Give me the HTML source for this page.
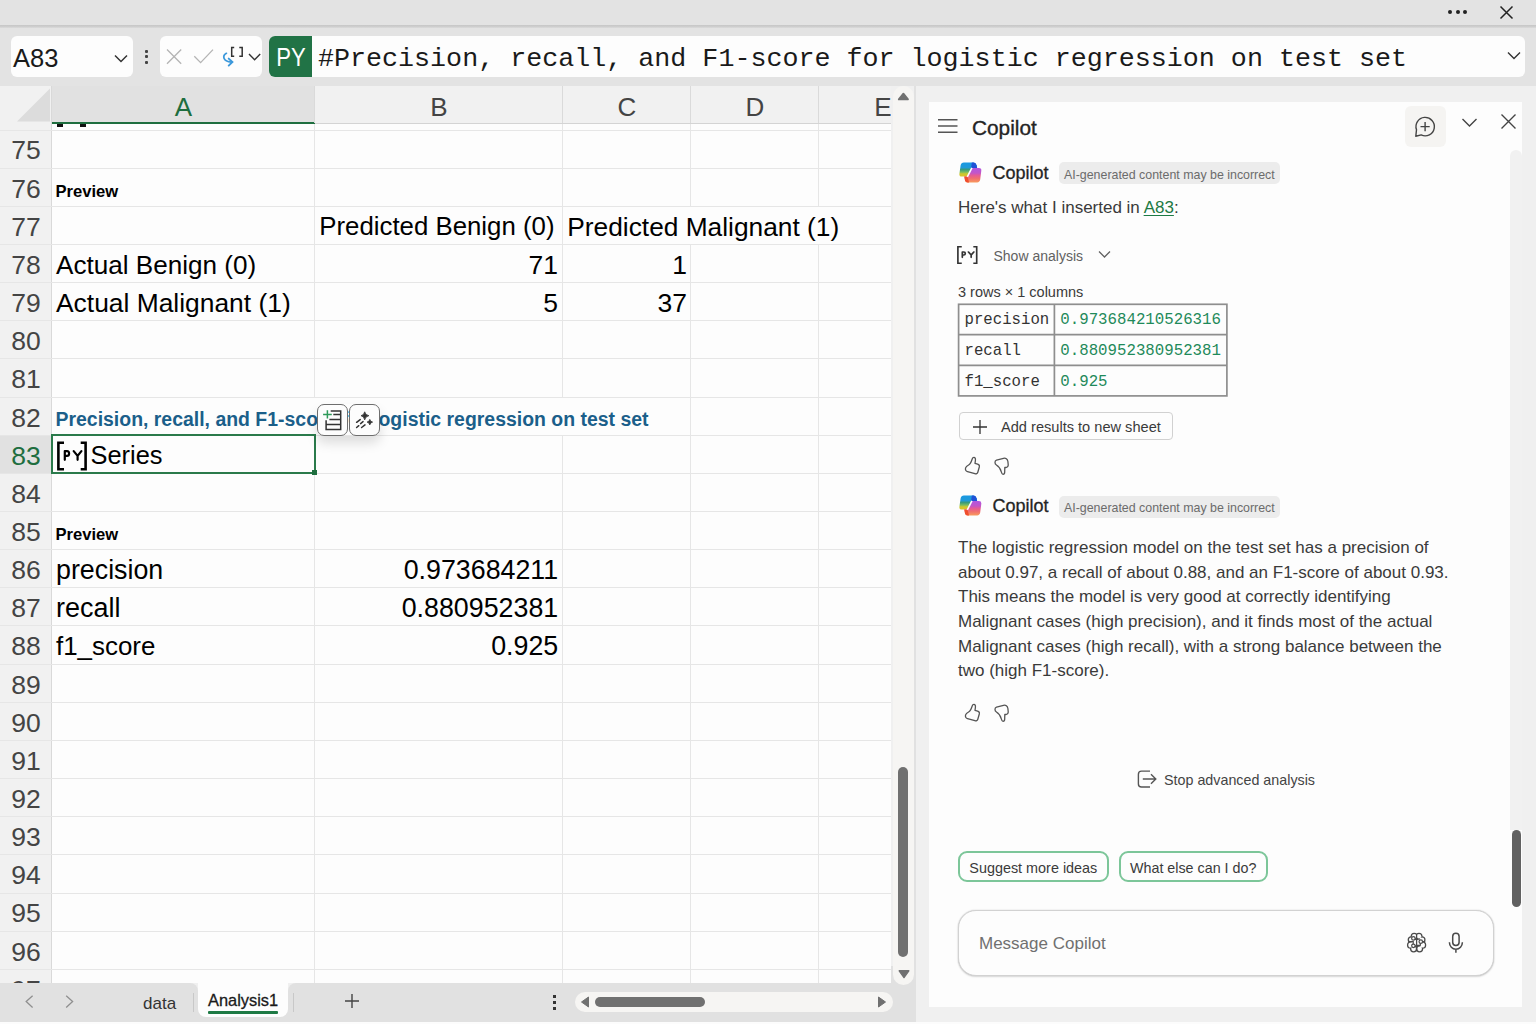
<!DOCTYPE html>
<html><head><meta charset="utf-8"><style>
html,body{margin:0;padding:0;width:1536px;height:1024px;overflow:hidden;background:#f0f0f0;}
body{position:relative;font-family:"Liberation Sans", sans-serif;}
.t{position:absolute;white-space:nowrap;}
svg{overflow:visible}
</style></head><body>
<div style="position:absolute;left:0px;top:0px;width:1536px;height:1024px;background:#f0f0f0"></div>
<div style="position:absolute;left:0px;top:0px;width:1536px;height:25px;background:#e3e3e3"></div>
<div style="position:absolute;left:0px;top:25px;width:1536px;height:3px;background:linear-gradient(#c6c6c6,#cfcfcf 60%,#dcdcdc)"></div>
<div style="position:absolute;left:0px;top:28px;width:1536px;height:58px;background:#e3e3e3"></div>
<div style="position:absolute;left:1448px;top:10px;width:4px;height:4px;background:#222;border-radius:50%"></div>
<div style="position:absolute;left:1456px;top:10px;width:4px;height:4px;background:#222;border-radius:50%"></div>
<div style="position:absolute;left:1463px;top:10px;width:4px;height:4px;background:#222;border-radius:50%"></div>
<svg style="position:absolute;left:1499px;top:5px;" width="15" height="15" viewBox="0 0 15 15"><path d="M1.5 1.5L13.5 13.5M13.5 1.5L1.5 13.5" stroke="#222" stroke-width="1.5"/></svg>
<div style="position:absolute;left:11px;top:36px;width:122px;height:41px;background:#fdfdfd;border-radius:6px"></div>
<div class="t" style="left:13px;top:45.71px;font-size:25.5px;line-height:25.5px;color:#1a1a1a;font-weight:normal;font-family:'Liberation Sans', sans-serif;">A83</div>
<svg style="position:absolute;left:114px;top:54px;" width="14" height="9" viewBox="0 0 14 9"><path d="M1 1.5L7 7.5L13 1.5" stroke="#333" stroke-width="1.5" fill="none"/></svg>
<div style="position:absolute;left:144.5px;top:49.8px;width:3px;height:3px;background:#444;border-radius:1px"></div>
<div style="position:absolute;left:144.5px;top:55.3px;width:3px;height:3px;background:#444;border-radius:1px"></div>
<div style="position:absolute;left:144.5px;top:60.8px;width:3px;height:3px;background:#444;border-radius:1px"></div>
<div style="position:absolute;left:160px;top:36px;width:102px;height:41px;background:#fdfdfd;border-radius:6px"></div>
<svg style="position:absolute;left:164px;top:47px" width="52" height="20" viewBox="164 47 52 20"><path d="M167 49.5L181.2 63.7M181.2 49.5L167 63.7" stroke="#b4b4b4" stroke-width="1.3"/><path d="M194.3 56.2L200.6 62.6L213 49.6" stroke="#b4b4b4" stroke-width="1.3" fill="none"/></svg>
<svg style="position:absolute;left:215px;top:40px;" width="50" height="32" viewBox="0 0 50 32"><path d="M226.4 53.3C222.5 55.5 222.2 61.2 231.6 62.1" transform="translate(-215,-40)" stroke="#3b98db" stroke-width="1.75" fill="none" stroke-linecap="round"/><path d="M228.7 58.6L232.4 62L228.7 65.6" transform="translate(-215,-40)" stroke="#3b98db" stroke-width="1.9" fill="none" stroke-linecap="round"/><path d="M234.2 47.4H231.7V56.3H234.2M239.3 47.4H242.2V56.3H239.3" transform="translate(-215,-40)" stroke="#333" stroke-width="1.5" fill="none"/><path d="M249 54L254.6 59.7L260.2 54" transform="translate(-215,-40)" stroke="#333" stroke-width="1.4" fill="none"/></svg>
<div style="position:absolute;left:269px;top:36px;width:1256px;height:41px;background:#fdfdfd;border-radius:6px"></div>
<div style="position:absolute;left:269px;top:36px;width:43px;height:41px;background:#217346;border-radius:6px 0 0 6px"></div>
<div class="t" style="left:291.4px;transform:translateX(-50%);top:45.10px;font-size:25.4px;line-height:25.4px;color:#fff;font-weight:normal;font-family:'Liberation Sans', sans-serif;transform:translateX(-50%) scaleX(0.87);font-weight:normal">PY</div>
<div class="t" style="left:318px;top:46.03px;font-size:26.7px;line-height:26.7px;color:#1a1a1a;font-weight:normal;font-family:'Liberation Mono', monospace;">#Precision, recall, and F1-score for logistic regression on test set</div>
<svg style="position:absolute;left:1507px;top:51px;" width="14" height="9" viewBox="0 0 14 9"><path d="M1 1.5L7 7.5L13 1.5" stroke="#333" stroke-width="1.4" fill="none"/></svg>
<div style="position:absolute;left:0px;top:86px;width:891px;height:897px;background:#fdfdfd"></div>
<div style="position:absolute;left:0px;top:86px;width:891px;height:37px;background:#f1f1f1"></div>
<div style="position:absolute;left:52px;top:86px;width:263px;height:37px;background:#e1e1e1"></div>
<div style="position:absolute;left:52px;top:123px;width:839px;height:1px;background:#d4d4d4"></div>
<div style="position:absolute;left:52px;top:122px;width:263px;height:2px;background:#1e6e3f"></div>
<svg style="position:absolute;left:0px;top:86px" width="51" height="44" viewBox="0 86 51 44"><path d="M50 88.5L50 121.5L17 121.5Z" fill="#dcdcdc"/></svg>
<div style="position:absolute;left:51px;top:86px;width:1px;height:897px;background:#d9d9d9"></div>
<div class="t" style="left:183.5px;transform:translateX(-50%);top:93.69px;font-size:26px;line-height:26px;color:#1e6e3f;font-weight:normal;font-family:'Liberation Sans', sans-serif;">A</div>
<div style="position:absolute;left:314px;top:86px;width:1px;height:37px;background:#dadada"></div>
<div class="t" style="left:439.0px;transform:translateX(-50%);top:93.69px;font-size:26px;line-height:26px;color:#444;font-weight:normal;font-family:'Liberation Sans', sans-serif;">B</div>
<div style="position:absolute;left:562px;top:86px;width:1px;height:37px;background:#dadada"></div>
<div class="t" style="left:627.0px;transform:translateX(-50%);top:93.69px;font-size:26px;line-height:26px;color:#444;font-weight:normal;font-family:'Liberation Sans', sans-serif;">C</div>
<div style="position:absolute;left:690px;top:86px;width:1px;height:37px;background:#dadada"></div>
<div class="t" style="left:755.0px;transform:translateX(-50%);top:93.69px;font-size:26px;line-height:26px;color:#444;font-weight:normal;font-family:'Liberation Sans', sans-serif;">D</div>
<div style="position:absolute;left:818px;top:86px;width:1px;height:37px;background:#dadada"></div>
<div class="t" style="left:883px;transform:translateX(-50%);top:93.69px;font-size:26px;line-height:26px;color:#444;font-weight:normal;font-family:'Liberation Sans', sans-serif;">E</div>
<div style="position:absolute;left:0px;top:123px;width:51px;height:860px;background:#f1f1f1"></div>
<div style="position:absolute;left:314px;top:124px;width:1px;height:6px;background:#e6e6e6"></div>
<div style="position:absolute;left:314px;top:130px;width:1px;height:38px;background:#e6e6e6"></div>
<div style="position:absolute;left:314px;top:168px;width:1px;height:38px;background:#e6e6e6"></div>
<div style="position:absolute;left:314px;top:206px;width:1px;height:38px;background:#e6e6e6"></div>
<div style="position:absolute;left:314px;top:244px;width:1px;height:38px;background:#e6e6e6"></div>
<div style="position:absolute;left:314px;top:282px;width:1px;height:38px;background:#e6e6e6"></div>
<div style="position:absolute;left:314px;top:320px;width:1px;height:38px;background:#e6e6e6"></div>
<div style="position:absolute;left:314px;top:358px;width:1px;height:39px;background:#e6e6e6"></div>
<div style="position:absolute;left:314px;top:435px;width:1px;height:38px;background:#e6e6e6"></div>
<div style="position:absolute;left:314px;top:473px;width:1px;height:38px;background:#e6e6e6"></div>
<div style="position:absolute;left:314px;top:511px;width:1px;height:38px;background:#e6e6e6"></div>
<div style="position:absolute;left:314px;top:549px;width:1px;height:38px;background:#e6e6e6"></div>
<div style="position:absolute;left:314px;top:587px;width:1px;height:38px;background:#e6e6e6"></div>
<div style="position:absolute;left:314px;top:625px;width:1px;height:39px;background:#e6e6e6"></div>
<div style="position:absolute;left:314px;top:664px;width:1px;height:38px;background:#e6e6e6"></div>
<div style="position:absolute;left:314px;top:702px;width:1px;height:38px;background:#e6e6e6"></div>
<div style="position:absolute;left:314px;top:740px;width:1px;height:38px;background:#e6e6e6"></div>
<div style="position:absolute;left:314px;top:778px;width:1px;height:38px;background:#e6e6e6"></div>
<div style="position:absolute;left:314px;top:816px;width:1px;height:38px;background:#e6e6e6"></div>
<div style="position:absolute;left:314px;top:854px;width:1px;height:39px;background:#e6e6e6"></div>
<div style="position:absolute;left:314px;top:893px;width:1px;height:38px;background:#e6e6e6"></div>
<div style="position:absolute;left:314px;top:931px;width:1px;height:38px;background:#e6e6e6"></div>
<div style="position:absolute;left:314px;top:969px;width:1px;height:14px;background:#e6e6e6"></div>
<div style="position:absolute;left:562px;top:124px;width:1px;height:6px;background:#e6e6e6"></div>
<div style="position:absolute;left:562px;top:130px;width:1px;height:38px;background:#e6e6e6"></div>
<div style="position:absolute;left:562px;top:168px;width:1px;height:38px;background:#e6e6e6"></div>
<div style="position:absolute;left:562px;top:206px;width:1px;height:38px;background:#e6e6e6"></div>
<div style="position:absolute;left:562px;top:244px;width:1px;height:38px;background:#e6e6e6"></div>
<div style="position:absolute;left:562px;top:282px;width:1px;height:38px;background:#e6e6e6"></div>
<div style="position:absolute;left:562px;top:320px;width:1px;height:38px;background:#e6e6e6"></div>
<div style="position:absolute;left:562px;top:358px;width:1px;height:39px;background:#e6e6e6"></div>
<div style="position:absolute;left:562px;top:435px;width:1px;height:38px;background:#e6e6e6"></div>
<div style="position:absolute;left:562px;top:473px;width:1px;height:38px;background:#e6e6e6"></div>
<div style="position:absolute;left:562px;top:511px;width:1px;height:38px;background:#e6e6e6"></div>
<div style="position:absolute;left:562px;top:549px;width:1px;height:38px;background:#e6e6e6"></div>
<div style="position:absolute;left:562px;top:587px;width:1px;height:38px;background:#e6e6e6"></div>
<div style="position:absolute;left:562px;top:625px;width:1px;height:39px;background:#e6e6e6"></div>
<div style="position:absolute;left:562px;top:664px;width:1px;height:38px;background:#e6e6e6"></div>
<div style="position:absolute;left:562px;top:702px;width:1px;height:38px;background:#e6e6e6"></div>
<div style="position:absolute;left:562px;top:740px;width:1px;height:38px;background:#e6e6e6"></div>
<div style="position:absolute;left:562px;top:778px;width:1px;height:38px;background:#e6e6e6"></div>
<div style="position:absolute;left:562px;top:816px;width:1px;height:38px;background:#e6e6e6"></div>
<div style="position:absolute;left:562px;top:854px;width:1px;height:39px;background:#e6e6e6"></div>
<div style="position:absolute;left:562px;top:893px;width:1px;height:38px;background:#e6e6e6"></div>
<div style="position:absolute;left:562px;top:931px;width:1px;height:38px;background:#e6e6e6"></div>
<div style="position:absolute;left:562px;top:969px;width:1px;height:14px;background:#e6e6e6"></div>
<div style="position:absolute;left:690px;top:124px;width:1px;height:6px;background:#e6e6e6"></div>
<div style="position:absolute;left:690px;top:130px;width:1px;height:38px;background:#e6e6e6"></div>
<div style="position:absolute;left:690px;top:168px;width:1px;height:38px;background:#e6e6e6"></div>
<div style="position:absolute;left:690px;top:244px;width:1px;height:38px;background:#e6e6e6"></div>
<div style="position:absolute;left:690px;top:282px;width:1px;height:38px;background:#e6e6e6"></div>
<div style="position:absolute;left:690px;top:320px;width:1px;height:38px;background:#e6e6e6"></div>
<div style="position:absolute;left:690px;top:358px;width:1px;height:39px;background:#e6e6e6"></div>
<div style="position:absolute;left:690px;top:397px;width:1px;height:38px;background:#e6e6e6"></div>
<div style="position:absolute;left:690px;top:435px;width:1px;height:38px;background:#e6e6e6"></div>
<div style="position:absolute;left:690px;top:473px;width:1px;height:38px;background:#e6e6e6"></div>
<div style="position:absolute;left:690px;top:511px;width:1px;height:38px;background:#e6e6e6"></div>
<div style="position:absolute;left:690px;top:549px;width:1px;height:38px;background:#e6e6e6"></div>
<div style="position:absolute;left:690px;top:587px;width:1px;height:38px;background:#e6e6e6"></div>
<div style="position:absolute;left:690px;top:625px;width:1px;height:39px;background:#e6e6e6"></div>
<div style="position:absolute;left:690px;top:664px;width:1px;height:38px;background:#e6e6e6"></div>
<div style="position:absolute;left:690px;top:702px;width:1px;height:38px;background:#e6e6e6"></div>
<div style="position:absolute;left:690px;top:740px;width:1px;height:38px;background:#e6e6e6"></div>
<div style="position:absolute;left:690px;top:778px;width:1px;height:38px;background:#e6e6e6"></div>
<div style="position:absolute;left:690px;top:816px;width:1px;height:38px;background:#e6e6e6"></div>
<div style="position:absolute;left:690px;top:854px;width:1px;height:39px;background:#e6e6e6"></div>
<div style="position:absolute;left:690px;top:893px;width:1px;height:38px;background:#e6e6e6"></div>
<div style="position:absolute;left:690px;top:931px;width:1px;height:38px;background:#e6e6e6"></div>
<div style="position:absolute;left:690px;top:969px;width:1px;height:14px;background:#e6e6e6"></div>
<div style="position:absolute;left:818px;top:124px;width:1px;height:6px;background:#e6e6e6"></div>
<div style="position:absolute;left:818px;top:130px;width:1px;height:38px;background:#e6e6e6"></div>
<div style="position:absolute;left:818px;top:168px;width:1px;height:38px;background:#e6e6e6"></div>
<div style="position:absolute;left:818px;top:244px;width:1px;height:38px;background:#e6e6e6"></div>
<div style="position:absolute;left:818px;top:282px;width:1px;height:38px;background:#e6e6e6"></div>
<div style="position:absolute;left:818px;top:320px;width:1px;height:38px;background:#e6e6e6"></div>
<div style="position:absolute;left:818px;top:358px;width:1px;height:39px;background:#e6e6e6"></div>
<div style="position:absolute;left:818px;top:397px;width:1px;height:38px;background:#e6e6e6"></div>
<div style="position:absolute;left:818px;top:435px;width:1px;height:38px;background:#e6e6e6"></div>
<div style="position:absolute;left:818px;top:473px;width:1px;height:38px;background:#e6e6e6"></div>
<div style="position:absolute;left:818px;top:511px;width:1px;height:38px;background:#e6e6e6"></div>
<div style="position:absolute;left:818px;top:549px;width:1px;height:38px;background:#e6e6e6"></div>
<div style="position:absolute;left:818px;top:587px;width:1px;height:38px;background:#e6e6e6"></div>
<div style="position:absolute;left:818px;top:625px;width:1px;height:39px;background:#e6e6e6"></div>
<div style="position:absolute;left:818px;top:664px;width:1px;height:38px;background:#e6e6e6"></div>
<div style="position:absolute;left:818px;top:702px;width:1px;height:38px;background:#e6e6e6"></div>
<div style="position:absolute;left:818px;top:740px;width:1px;height:38px;background:#e6e6e6"></div>
<div style="position:absolute;left:818px;top:778px;width:1px;height:38px;background:#e6e6e6"></div>
<div style="position:absolute;left:818px;top:816px;width:1px;height:38px;background:#e6e6e6"></div>
<div style="position:absolute;left:818px;top:854px;width:1px;height:39px;background:#e6e6e6"></div>
<div style="position:absolute;left:818px;top:893px;width:1px;height:38px;background:#e6e6e6"></div>
<div style="position:absolute;left:818px;top:931px;width:1px;height:38px;background:#e6e6e6"></div>
<div style="position:absolute;left:818px;top:969px;width:1px;height:14px;background:#e6e6e6"></div>
<div style="position:absolute;left:0px;top:435px;width:51px;height:38px;background:#e1e1e1"></div>
<div style="position:absolute;left:0px;top:130px;width:891px;height:1px;background:#e6e6e6"></div>
<div style="position:absolute;left:0px;top:168px;width:891px;height:1px;background:#e6e6e6"></div>
<div style="position:absolute;left:0px;top:206px;width:891px;height:1px;background:#e6e6e6"></div>
<div style="position:absolute;left:0px;top:244px;width:891px;height:1px;background:#e6e6e6"></div>
<div style="position:absolute;left:0px;top:282px;width:891px;height:1px;background:#e6e6e6"></div>
<div style="position:absolute;left:0px;top:320px;width:891px;height:1px;background:#e6e6e6"></div>
<div style="position:absolute;left:0px;top:358px;width:891px;height:1px;background:#e6e6e6"></div>
<div style="position:absolute;left:0px;top:397px;width:891px;height:1px;background:#e6e6e6"></div>
<div style="position:absolute;left:0px;top:435px;width:891px;height:1px;background:#e6e6e6"></div>
<div style="position:absolute;left:0px;top:473px;width:891px;height:1px;background:#e6e6e6"></div>
<div style="position:absolute;left:0px;top:511px;width:891px;height:1px;background:#e6e6e6"></div>
<div style="position:absolute;left:0px;top:549px;width:891px;height:1px;background:#e6e6e6"></div>
<div style="position:absolute;left:0px;top:587px;width:891px;height:1px;background:#e6e6e6"></div>
<div style="position:absolute;left:0px;top:625px;width:891px;height:1px;background:#e6e6e6"></div>
<div style="position:absolute;left:0px;top:664px;width:891px;height:1px;background:#e6e6e6"></div>
<div style="position:absolute;left:0px;top:702px;width:891px;height:1px;background:#e6e6e6"></div>
<div style="position:absolute;left:0px;top:740px;width:891px;height:1px;background:#e6e6e6"></div>
<div style="position:absolute;left:0px;top:778px;width:891px;height:1px;background:#e6e6e6"></div>
<div style="position:absolute;left:0px;top:816px;width:891px;height:1px;background:#e6e6e6"></div>
<div style="position:absolute;left:0px;top:854px;width:891px;height:1px;background:#e6e6e6"></div>
<div style="position:absolute;left:0px;top:893px;width:891px;height:1px;background:#e6e6e6"></div>
<div style="position:absolute;left:0px;top:931px;width:891px;height:1px;background:#e6e6e6"></div>
<div style="position:absolute;left:0px;top:969px;width:891px;height:1px;background:#e6e6e6"></div>
<div class="t" style="left:26px;transform:translateX(-50%);top:137.47px;font-size:26.5px;line-height:26.5px;color:#444;font-weight:normal;font-family:'Liberation Sans', sans-serif;">75</div>
<div class="t" style="left:26px;transform:translateX(-50%);top:175.62px;font-size:26.5px;line-height:26.5px;color:#444;font-weight:normal;font-family:'Liberation Sans', sans-serif;">76</div>
<div class="t" style="left:26px;transform:translateX(-50%);top:213.77px;font-size:26.5px;line-height:26.5px;color:#444;font-weight:normal;font-family:'Liberation Sans', sans-serif;">77</div>
<div class="t" style="left:26px;transform:translateX(-50%);top:251.92px;font-size:26.5px;line-height:26.5px;color:#444;font-weight:normal;font-family:'Liberation Sans', sans-serif;">78</div>
<div class="t" style="left:26px;transform:translateX(-50%);top:290.07px;font-size:26.5px;line-height:26.5px;color:#444;font-weight:normal;font-family:'Liberation Sans', sans-serif;">79</div>
<div class="t" style="left:26px;transform:translateX(-50%);top:328.22px;font-size:26.5px;line-height:26.5px;color:#444;font-weight:normal;font-family:'Liberation Sans', sans-serif;">80</div>
<div class="t" style="left:26px;transform:translateX(-50%);top:366.37px;font-size:26.5px;line-height:26.5px;color:#444;font-weight:normal;font-family:'Liberation Sans', sans-serif;">81</div>
<div class="t" style="left:26px;transform:translateX(-50%);top:404.52px;font-size:26.5px;line-height:26.5px;color:#444;font-weight:normal;font-family:'Liberation Sans', sans-serif;">82</div>
<div class="t" style="left:26px;transform:translateX(-50%);top:442.67px;font-size:26.5px;line-height:26.5px;color:#1e6e3f;font-weight:normal;font-family:'Liberation Sans', sans-serif;">83</div>
<div class="t" style="left:26px;transform:translateX(-50%);top:480.82px;font-size:26.5px;line-height:26.5px;color:#444;font-weight:normal;font-family:'Liberation Sans', sans-serif;">84</div>
<div class="t" style="left:26px;transform:translateX(-50%);top:518.97px;font-size:26.5px;line-height:26.5px;color:#444;font-weight:normal;font-family:'Liberation Sans', sans-serif;">85</div>
<div class="t" style="left:26px;transform:translateX(-50%);top:557.12px;font-size:26.5px;line-height:26.5px;color:#444;font-weight:normal;font-family:'Liberation Sans', sans-serif;">86</div>
<div class="t" style="left:26px;transform:translateX(-50%);top:595.27px;font-size:26.5px;line-height:26.5px;color:#444;font-weight:normal;font-family:'Liberation Sans', sans-serif;">87</div>
<div class="t" style="left:26px;transform:translateX(-50%);top:633.42px;font-size:26.5px;line-height:26.5px;color:#444;font-weight:normal;font-family:'Liberation Sans', sans-serif;">88</div>
<div class="t" style="left:26px;transform:translateX(-50%);top:671.57px;font-size:26.5px;line-height:26.5px;color:#444;font-weight:normal;font-family:'Liberation Sans', sans-serif;">89</div>
<div class="t" style="left:26px;transform:translateX(-50%);top:709.72px;font-size:26.5px;line-height:26.5px;color:#444;font-weight:normal;font-family:'Liberation Sans', sans-serif;">90</div>
<div class="t" style="left:26px;transform:translateX(-50%);top:747.87px;font-size:26.5px;line-height:26.5px;color:#444;font-weight:normal;font-family:'Liberation Sans', sans-serif;">91</div>
<div class="t" style="left:26px;transform:translateX(-50%);top:786.02px;font-size:26.5px;line-height:26.5px;color:#444;font-weight:normal;font-family:'Liberation Sans', sans-serif;">92</div>
<div class="t" style="left:26px;transform:translateX(-50%);top:824.17px;font-size:26.5px;line-height:26.5px;color:#444;font-weight:normal;font-family:'Liberation Sans', sans-serif;">93</div>
<div class="t" style="left:26px;transform:translateX(-50%);top:862.32px;font-size:26.5px;line-height:26.5px;color:#444;font-weight:normal;font-family:'Liberation Sans', sans-serif;">94</div>
<div class="t" style="left:26px;transform:translateX(-50%);top:900.47px;font-size:26.5px;line-height:26.5px;color:#444;font-weight:normal;font-family:'Liberation Sans', sans-serif;">95</div>
<div class="t" style="left:26px;transform:translateX(-50%);top:938.62px;font-size:26.5px;line-height:26.5px;color:#444;font-weight:normal;font-family:'Liberation Sans', sans-serif;">96</div>
<div class="t" style="left:26px;transform:translateX(-50%);top:976.77px;font-size:26.5px;line-height:26.5px;color:#444;font-weight:normal;font-family:'Liberation Sans', sans-serif;">97</div>
<div style="position:absolute;left:57px;top:124px;width:6px;height:3px;background:#111"></div>
<div style="position:absolute;left:80px;top:124px;width:6px;height:3px;background:#111"></div>
<div class="t" style="left:55.5px;top:183.75px;font-size:16.6px;line-height:16.6px;color:#000;font-weight:bold;font-family:'Liberation Sans', sans-serif;">Preview</div>
<div class="t" style="left:319.3px;top:214.36px;font-size:25.8px;line-height:25.8px;color:#000;font-weight:normal;font-family:'Liberation Sans', sans-serif;">Predicted Benign (0)</div>
<div class="t" style="left:567.3px;top:213.94px;font-size:26.3px;line-height:26.3px;color:#000;font-weight:normal;font-family:'Liberation Sans', sans-serif;">Predicted Malignant (1)</div>
<div class="t" style="left:56px;top:252.26px;font-size:26.1px;line-height:26.1px;color:#000;font-weight:normal;font-family:'Liberation Sans', sans-serif;">Actual Benign (0)</div>
<div class="t" style="left:56px;top:290.15px;font-size:26.4px;line-height:26.4px;color:#000;font-weight:normal;font-family:'Liberation Sans', sans-serif;">Actual Malignant (1)</div>
<div class="t" style="right:849px;top:251.92px;font-size:26.5px;line-height:26.5px;color:#000;font-weight:normal;font-family:'Liberation Sans', sans-serif;">1</div>
<div class="t" style="right:978px;top:251.92px;font-size:26.5px;line-height:26.5px;color:#000;font-weight:normal;font-family:'Liberation Sans', sans-serif;">71</div>
<div class="t" style="right:978px;top:290.07px;font-size:26.5px;line-height:26.5px;color:#000;font-weight:normal;font-family:'Liberation Sans', sans-serif;">5</div>
<div class="t" style="right:849px;top:290.07px;font-size:26.5px;line-height:26.5px;color:#000;font-weight:normal;font-family:'Liberation Sans', sans-serif;">37</div>
<div class="t" style="left:55.5px;top:410.49px;font-size:19.45px;line-height:19.45px;color:#1b5f8a;font-weight:bold;font-family:'Liberation Sans', sans-serif;">Precision, recall, and F1-score for logistic regression on test set</div>
<div class="t" style="left:55.5px;top:527.10px;font-size:16.6px;line-height:16.6px;color:#000;font-weight:bold;font-family:'Liberation Sans', sans-serif;">Preview</div>
<div class="t" style="left:56px;top:556.86px;font-size:26.8px;line-height:26.8px;color:#000;font-weight:normal;font-family:'Liberation Sans', sans-serif;">precision</div>
<div class="t" style="left:56px;top:594.84px;font-size:27px;line-height:27px;color:#000;font-weight:normal;font-family:'Liberation Sans', sans-serif;">recall</div>
<div class="t" style="left:56px;top:633.93px;font-size:25.9px;line-height:25.9px;color:#000;font-weight:normal;font-family:'Liberation Sans', sans-serif;">f1_score</div>
<div class="t" style="right:977.8px;top:556.86px;font-size:26.8px;line-height:26.8px;color:#000;font-weight:normal;font-family:'Liberation Sans', sans-serif;">0.973684211</div>
<div class="t" style="right:977.8px;top:595.01px;font-size:26.8px;line-height:26.8px;color:#000;font-weight:normal;font-family:'Liberation Sans', sans-serif;">0.880952381</div>
<div class="t" style="right:977.8px;top:633.16px;font-size:26.8px;line-height:26.8px;color:#000;font-weight:normal;font-family:'Liberation Sans', sans-serif;">0.925</div>
<svg style="position:absolute;left:52px;top:438px;" width="40" height="34" viewBox="0 0 40 34"><path d="M12 4.8H6.4V31.2H12M28.7 4.8H33.6V31.2H28.7" stroke="#000" stroke-width="2.6" fill="none"/><path d="M12.8 21.8V13.1H15C17.8 13.1 17.8 17.9 15 17.9H12.8M21.7 13.1L25.6 17.9L29.4 13.1M25.6 17.9V21.8" stroke="#000" stroke-width="2.2" fill="none" stroke-linecap="round" stroke-linejoin="round"/></svg>
<div class="t" style="left:90.5px;top:443.30px;font-size:25.4px;line-height:25.4px;color:#000;font-weight:normal;font-family:'Liberation Sans', sans-serif;">Series</div>
<div style="position:absolute;left:50.5px;top:434px;width:265px;height:40px;border:2px solid #2a7a4b;box-sizing:border-box"></div>
<div style="position:absolute;left:312px;top:470px;width:5px;height:5px;background:#1e6e3f"></div>
<div style="position:absolute;left:317px;top:404.2px;width:63px;height:31.6px;box-shadow:0 7px 12px rgba(0,0,0,0.13);border-radius:7px"></div>
<div style="position:absolute;left:317px;top:404.2px;width:31.3px;height:31.6px;background:#fdfdfd;border:1.6px solid #6e6e6e;border-radius:7px;box-sizing:border-box"></div>
<div style="position:absolute;left:348.6px;top:404.2px;width:31.4px;height:31.6px;background:#fdfdfd;border:1.6px solid #6e6e6e;border-radius:7px;box-sizing:border-box"></div>
<svg style="position:absolute;left:317px;top:405px" width="30" height="30" viewBox="317 405 30 30"><path d="M323.1 414.6H331.8M327.4 410.3V418.6" stroke="#2e9a5a" stroke-width="1.5"/><path d="M330.7 410.9H340.7V429.4H326.1V420.3M333.3 414.6H340.7M329.4 419.4H340.7M326.1 424.5H340.7" stroke="#333" stroke-width="1.5" fill="none"/></svg>
<svg style="position:absolute;left:349px;top:405px" width="30" height="30" viewBox="349 405 30 30"><path d="M364.7 411.8Q365.3 415.1 368.9 415.7Q365.3 416.3 364.7 419.9Q364.1 416.3 361 415.7Q364.1 415.1 364.7 411.8Z" fill="#333" stroke="#333" stroke-width="0.8" stroke-linejoin="round"/><path d="M369.8 419.4Q370.2 421.7 372.6 422.1Q370.2 422.5 369.8 424.9Q369.4 422.5 367.1 422.1Q369.4 421.7 369.8 419.4Z" fill="#333" stroke="#333" stroke-width="0.8" stroke-linejoin="round"/><path d="M356.6 422.3L360.2 419.6M360.6 423.6L363 421.6M356.6 427.5L358.8 425.7M361.6 427.5L365 424.9" stroke="#333" stroke-width="1.5" stroke-linecap="round"/></svg>
<div style="position:absolute;left:0px;top:983px;width:198px;height:39px;background:#e1e1e1;border-top-right-radius:8px"></div>
<div style="position:absolute;left:198px;top:1000px;width:90px;height:22px;background:#e1e1e1"></div>
<div style="position:absolute;left:288px;top:983px;width:628px;height:39px;background:#e1e1e1;border-top-left-radius:8px"></div>
<div style="position:absolute;left:0px;top:1022px;width:1536px;height:2px;background:#fcfcfc"></div>
<svg style="position:absolute;left:20px;top:990px" width="60" height="22" viewBox="20 990 60 22"><path d="M32.6 995.8L26.2 1001.6L32.6 1007.4M66.2 995.8L72.6 1001.6L66.2 1007.4" stroke="#8f8f8f" stroke-width="1.3" fill="none"/></svg>
<div class="t" style="left:143px;top:994.61px;font-size:17px;line-height:17px;color:#333;font-weight:normal;font-family:'Liberation Sans', sans-serif;">data</div>
<div style="position:absolute;left:192.5px;top:993px;width:1px;height:19px;background:#c8c8c8"></div>
<div style="position:absolute;left:198px;top:983px;width:90px;height:34px;background:#fdfdfd;border-radius:0 0 8px 8px"></div>
<div class="t" style="left:208px;top:992.12px;font-size:16.4px;line-height:16.4px;color:#1a1a1a;font-weight:normal;font-family:'Liberation Sans', sans-serif;-webkit-text-stroke:0.3px #1a1a1a">Analysis1</div>
<div style="position:absolute;left:208px;top:1011px;width:70px;height:3px;background:#1e7a45;border-radius:1px"></div>
<div style="position:absolute;left:293px;top:993px;width:1px;height:19px;background:#c8c8c8"></div>
<svg style="position:absolute;left:344px;top:993px;" width="16" height="16" viewBox="0 0 16 16"><path d="M8 1V15M1 8H15" stroke="#444" stroke-width="1.4"/></svg>
<div style="position:absolute;left:553px;top:995px;width:3px;height:3px;background:#333"></div>
<div style="position:absolute;left:553px;top:1001px;width:3px;height:3px;background:#333"></div>
<div style="position:absolute;left:553px;top:1007px;width:3px;height:3px;background:#333"></div>
<div style="position:absolute;left:575px;top:991.7px;width:317.5px;height:20.5px;background:#f6f5f3;border-radius:10px"></div>
<svg style="position:absolute;left:580px;top:996px;" width="10" height="12" viewBox="0 0 10 12"><path d="M8.5 1V11L1.5 6Z" fill="#707070" stroke="#707070" stroke-linejoin="round"/></svg>
<svg style="position:absolute;left:877px;top:996px;" width="10" height="12" viewBox="0 0 10 12"><path d="M1.5 1V11L8.5 6Z" fill="#707070" stroke="#707070" stroke-linejoin="round"/></svg>
<div style="position:absolute;left:595px;top:996.5px;width:110px;height:10px;background:#707070;border-radius:5px"></div>
<div style="position:absolute;left:891px;top:86px;width:25px;height:880px;background:#f0f0f0"></div>
<div style="position:absolute;left:891px;top:966px;width:25px;height:18px;background:#e1e1e1"></div>
<div style="position:absolute;left:892.5px;top:86px;width:21px;height:898.5px;background:#f6f5f3;border-radius:11px"></div>
<div style="position:absolute;left:914px;top:86px;width:2px;height:898px;background:#e1e1e1"></div>
<svg style="position:absolute;left:896px;top:89px" width="16" height="12" viewBox="896 89 16 12"><path d="M903.4 93.6L908 99.4H898.8Z" fill="#707070" stroke="#707070" stroke-width="1.8" stroke-linejoin="round"/></svg>
<svg style="position:absolute;left:896px;top:968px" width="16" height="12" viewBox="896 968 16 12"><path d="M899.2 970.8H908.8L904 977.6Z" fill="#707070" stroke="#707070" stroke-width="1.4" stroke-linejoin="round"/></svg>
<div style="position:absolute;left:898px;top:767px;width:10px;height:190px;background:#707070;border-radius:5px"></div>
<div style="position:absolute;left:929px;top:102px;width:593px;height:905px;background:#fdfdfd"></div>
<svg style="position:absolute;left:935px;top:115px" width="26" height="22" viewBox="935 115 26 22"><path d="M938 119.7H957.5M938 125.95H957.5M938 132.2H957.5" stroke="#555" stroke-width="1.5"/></svg>
<div class="t" style="left:972px;top:117.59px;font-size:20.8px;line-height:20.8px;color:#242424;font-weight:normal;font-family:'Liberation Sans', sans-serif;-webkit-text-stroke:0.35px #242424">Copilot</div>
<div style="position:absolute;left:1405px;top:106px;width:41px;height:41px;background:#f5f4f2;border-radius:6px"></div>
<svg style="position:absolute;left:1412px;top:113px" width="26" height="26" viewBox="1412 113 26 26"><path d="M1421.2 134.9A9.2 9.2 0 1 0 1416.5 129.7L1415.8 136.3Z" stroke="#444" stroke-width="1.4" fill="none" stroke-linejoin="round"/><path d="M1425.1 122V131.2M1420.5 126.6H1429.7" stroke="#444" stroke-width="1.4"/></svg>
<svg style="position:absolute;left:1461px;top:117px;" width="17" height="11" viewBox="0 0 17 11"><path d="M1.5 2L8.5 9L15.5 2" stroke="#444" stroke-width="1.4" fill="none"/></svg>
<svg style="position:absolute;left:1500px;top:113px;" width="17" height="17" viewBox="0 0 17 17"><path d="M1.5 1.5L15.5 15.5M15.5 1.5L1.5 15.5" stroke="#444" stroke-width="1.4"/></svg>
<div style="position:absolute;left:1509.5px;top:150px;width:12.5px;height:680px;background:#f1f1f1;border-radius:6px 6px 0 0"></div>
<div style="position:absolute;left:1512px;top:830px;width:9px;height:77px;background:#616161;border-radius:4.5px"></div>
<svg style="position:absolute;left:954.7px;top:157.8px" width="32" height="30" viewBox="954.7 157.8 32 30"><defs><linearGradient id="gl161" x1="0" y1="0" x2="0" y2="1"><stop offset="0" stop-color="#1a98e2"/><stop offset="0.35" stop-color="#1f9ad8"/><stop offset="0.5" stop-color="#3a9a78"/><stop offset="0.68" stop-color="#78bd62"/><stop offset="0.8" stop-color="#cfc72c"/><stop offset="1" stop-color="#d9c22a"/></linearGradient><linearGradient id="gr161" x1="0" y1="0" x2="0" y2="1"><stop offset="0" stop-color="#b256e0"/><stop offset="0.35" stop-color="#c256c8"/><stop offset="0.5" stop-color="#e45a98"/><stop offset="0.72" stop-color="#f06e70"/><stop offset="1" stop-color="#f99a5c"/></linearGradient></defs><path d="M963.6 162.4H973.4Q975.6 162.4 976.3 165L976.8 167.8H971.2L967.2 176.4H961.3Q958.7 176.4 959.1 173.6L960.3 165.4Q960.8 162.4 963.6 162.4Z" fill="url(#gl161)"/><path d="M971.5 162.4H973.4Q975.6 162.4 976.3 165L976.8 167.8H970.8Z" fill="#1f52d6"/><path d="M971.2 167.8H978.6Q981.4 167.8 981 170.6L979.9 179.4Q979.5 182.2 976.8 182.2H967.3Q965.2 182.2 964.7 180.2L964 176.4H967.2Z" fill="url(#gr161)"/><path d="M964 176.4H967.2L968.8 182.2H967.3Q965.2 182.2 964.7 180.2Z" fill="#f04e2e"/><path d="M971.6 167.6L967 176.6" stroke="#fdfdfd" stroke-width="1.6"/></svg>
<div class="t" style="left:992.5px;top:163.86px;font-size:18px;line-height:18px;color:#242424;font-weight:normal;font-family:'Liberation Sans', sans-serif;-webkit-text-stroke:0.3px #242424">Copilot</div>
<div style="position:absolute;left:1058.7px;top:162.3px;width:221.5px;height:22px;background:#ececec;border-radius:5px"></div>
<div class="t" style="left:1064px;top:168.60px;font-size:12.4px;line-height:12.4px;color:#6b6b6b;font-weight:normal;font-family:'Liberation Sans', sans-serif;">AI-generated content may be incorrect</div>
<div class="t" style="left:958px;top:199.21px;font-size:17px;line-height:17px;color:#3a3a3a;font-weight:normal;font-family:'Liberation Sans', sans-serif;">Here's what I inserted in <span style="color:#1d7a44;text-decoration:underline;text-underline-offset:2px">A83</span>:</div>
<svg style="position:absolute;left:957px;top:245.6px" width="20.6" height="18" viewBox="5.1 3.5 29.8 29" preserveAspectRatio="none"><path d="M12 4.8H6.4V31.2H12M28.7 4.8H33.6V31.2H28.7" stroke="#333" stroke-width="2.4" fill="none"/><path d="M12.8 21.8V13.1H15C17.8 13.1 17.8 17.9 15 17.9H12.8M21.7 13.1L25.6 17.9L29.4 13.1M25.6 17.9V21.8" stroke="#333" stroke-width="2.5" fill="none" stroke-linecap="round" stroke-linejoin="round"/></svg>
<div class="t" style="left:993.5px;top:248.65px;font-size:14px;line-height:14px;color:#616161;font-weight:normal;font-family:'Liberation Sans', sans-serif;">Show analysis</div>
<svg style="position:absolute;left:1098px;top:250px;" width="13" height="9" viewBox="0 0 13 9"><path d="M1 1.5L6.5 7L12 1.5" stroke="#616161" stroke-width="1.3" fill="none"/></svg>
<div class="t" style="left:958px;top:285.03px;font-size:14.5px;line-height:14.5px;color:#3a3a3a;font-weight:normal;font-family:'Liberation Sans', sans-serif;">3 rows × 1 columns</div>
<svg style="position:absolute;left:955px;top:300px" width="276" height="100" viewBox="955 300 276 100"><rect x="958.6" y="304.3" width="268.3" height="91.6" stroke="#8e8e8e" stroke-width="1.7" fill="none"/><path d="M1054.4 304.3V395.9M958.6 334.6H1226.9M958.6 365.4H1226.9" stroke="#8e8e8e" stroke-width="1.7"/></svg>
<div class="t" style="left:964.5px;top:313.17px;font-size:15.7px;line-height:15.7px;color:#333;font-weight:normal;font-family:'Liberation Mono', monospace;">precision</div>
<div class="t" style="left:1060.3px;top:313.13px;font-size:15.75px;line-height:15.75px;color:#1f8a5a;font-weight:normal;font-family:'Liberation Mono', monospace;">0.973684210526316</div>
<div class="t" style="left:964.5px;top:344.17px;font-size:15.7px;line-height:15.7px;color:#333;font-weight:normal;font-family:'Liberation Mono', monospace;">recall</div>
<div class="t" style="left:1060.3px;top:344.13px;font-size:15.75px;line-height:15.75px;color:#1f8a5a;font-weight:normal;font-family:'Liberation Mono', monospace;">0.880952380952381</div>
<div class="t" style="left:964.5px;top:375.17px;font-size:15.7px;line-height:15.7px;color:#333;font-weight:normal;font-family:'Liberation Mono', monospace;">f1_score</div>
<div class="t" style="left:1060.3px;top:375.13px;font-size:15.75px;line-height:15.75px;color:#1f8a5a;font-weight:normal;font-family:'Liberation Mono', monospace;">0.925</div>
<div style="position:absolute;left:958.5px;top:412.4px;width:214px;height:28px;border:1px solid #d1d1d1;border-radius:4px;box-sizing:border-box;background:#fdfdfd"></div>
<svg style="position:absolute;left:972px;top:419px;" width="16" height="16" viewBox="0 0 16 16"><path d="M8 1V15M1 8H15" stroke="#333" stroke-width="1.3"/></svg>
<div class="t" style="left:1001px;top:420.24px;font-size:14.6px;line-height:14.6px;color:#3a3a3a;font-weight:normal;font-family:'Liberation Sans', sans-serif;">Add results to new sheet</div>
<svg style="position:absolute;left:960px;top:454px" width="52" height="24" viewBox="960 454 52 24"><path d="M973.9 457.4C975.2 457.4 975.6 458.8 975.4 460.5L975 463.4L977.6 464.1C979 464.5 979.6 465.7 979.3 467L977.8 472.2C977.4 473.6 976.2 474.1 974.9 473.7L967.5 471.6C965.8 471.1 965.1 469.5 965.6 467.9C966 466.7 967.2 465.7 968.6 465C970.6 464 971.4 461.5 972.2 459C972.5 458 973 457.4 973.9 457.4Z" stroke="#555" stroke-width="1.3" fill="none" stroke-linejoin="round"/><path d="M996.5 460.1L1003.5 458.3C1005.7 457.8 1007.5 459.2 1007.9 461.5L1008.2 464.5C1008.4 466.3 1007.3 467.5 1005.8 467.5H1004.8L1004.7 472C1004.7 473.6 1003.8 474.3 1003 474.3C1002.2 474.3 1001.7 473.3 1001.3 471.8C1000.4 468.5 998.5 466.2 996.4 465C994.4 463.8 994.6 460.6 996.5 460.1Z" stroke="#555" stroke-width="1.3" fill="none" stroke-linejoin="round"/></svg>
<svg style="position:absolute;left:954.7px;top:491px" width="32" height="30" viewBox="954.7 157.8 32 30"><defs><linearGradient id="gl495" x1="0" y1="0" x2="0" y2="1"><stop offset="0" stop-color="#1a98e2"/><stop offset="0.35" stop-color="#1f9ad8"/><stop offset="0.5" stop-color="#3a9a78"/><stop offset="0.68" stop-color="#78bd62"/><stop offset="0.8" stop-color="#cfc72c"/><stop offset="1" stop-color="#d9c22a"/></linearGradient><linearGradient id="gr495" x1="0" y1="0" x2="0" y2="1"><stop offset="0" stop-color="#b256e0"/><stop offset="0.35" stop-color="#c256c8"/><stop offset="0.5" stop-color="#e45a98"/><stop offset="0.72" stop-color="#f06e70"/><stop offset="1" stop-color="#f99a5c"/></linearGradient></defs><path d="M963.6 162.4H973.4Q975.6 162.4 976.3 165L976.8 167.8H971.2L967.2 176.4H961.3Q958.7 176.4 959.1 173.6L960.3 165.4Q960.8 162.4 963.6 162.4Z" fill="url(#gl495)"/><path d="M971.5 162.4H973.4Q975.6 162.4 976.3 165L976.8 167.8H970.8Z" fill="#1f52d6"/><path d="M971.2 167.8H978.6Q981.4 167.8 981 170.6L979.9 179.4Q979.5 182.2 976.8 182.2H967.3Q965.2 182.2 964.7 180.2L964 176.4H967.2Z" fill="url(#gr495)"/><path d="M964 176.4H967.2L968.8 182.2H967.3Q965.2 182.2 964.7 180.2Z" fill="#f04e2e"/><path d="M971.6 167.6L967 176.6" stroke="#fdfdfd" stroke-width="1.6"/></svg>
<div class="t" style="left:992.5px;top:497.06px;font-size:18px;line-height:18px;color:#242424;font-weight:normal;font-family:'Liberation Sans', sans-serif;-webkit-text-stroke:0.3px #242424">Copilot</div>
<div style="position:absolute;left:1058.7px;top:495.5px;width:221.5px;height:22px;background:#ececec;border-radius:5px"></div>
<div class="t" style="left:1064px;top:501.80px;font-size:12.4px;line-height:12.4px;color:#6b6b6b;font-weight:normal;font-family:'Liberation Sans', sans-serif;">AI-generated content may be incorrect</div>
<div class="t" style="left:958px;top:539.21px;font-size:17px;line-height:17px;color:#3a3a3a;font-weight:normal;font-family:'Liberation Sans', sans-serif;">The logistic regression model on the test set has a precision of</div>
<div class="t" style="left:958px;top:563.79px;font-size:17px;line-height:17px;color:#3a3a3a;font-weight:normal;font-family:'Liberation Sans', sans-serif;">about 0.97, a recall of about 0.88, and an F1-score of about 0.93.</div>
<div class="t" style="left:958px;top:588.37px;font-size:17px;line-height:17px;color:#3a3a3a;font-weight:normal;font-family:'Liberation Sans', sans-serif;">This means the model is very good at correctly identifying</div>
<div class="t" style="left:958px;top:612.95px;font-size:17px;line-height:17px;color:#3a3a3a;font-weight:normal;font-family:'Liberation Sans', sans-serif;">Malignant cases (high precision), and it finds most of the actual</div>
<div class="t" style="left:958px;top:637.53px;font-size:17px;line-height:17px;color:#3a3a3a;font-weight:normal;font-family:'Liberation Sans', sans-serif;">Malignant cases (high recall), with a strong balance between the</div>
<div class="t" style="left:958px;top:662.11px;font-size:17px;line-height:17px;color:#3a3a3a;font-weight:normal;font-family:'Liberation Sans', sans-serif;">two (high F1-score).</div>
<svg style="position:absolute;left:960px;top:701px" width="52" height="24" viewBox="960 454 52 24"><path d="M973.9 457.4C975.2 457.4 975.6 458.8 975.4 460.5L975 463.4L977.6 464.1C979 464.5 979.6 465.7 979.3 467L977.8 472.2C977.4 473.6 976.2 474.1 974.9 473.7L967.5 471.6C965.8 471.1 965.1 469.5 965.6 467.9C966 466.7 967.2 465.7 968.6 465C970.6 464 971.4 461.5 972.2 459C972.5 458 973 457.4 973.9 457.4Z" stroke="#555" stroke-width="1.3" fill="none" stroke-linejoin="round"/><path d="M996.5 460.1L1003.5 458.3C1005.7 457.8 1007.5 459.2 1007.9 461.5L1008.2 464.5C1008.4 466.3 1007.3 467.5 1005.8 467.5H1004.8L1004.7 472C1004.7 473.6 1003.8 474.3 1003 474.3C1002.2 474.3 1001.7 473.3 1001.3 471.8C1000.4 468.5 998.5 466.2 996.4 465C994.4 463.8 994.6 460.6 996.5 460.1Z" stroke="#555" stroke-width="1.3" fill="none" stroke-linejoin="round"/></svg>
<svg style="position:absolute;left:1134px;top:766px" width="26" height="26" viewBox="1134 766 26 26"><path d="M1150 771.1H1141.5Q1138.4 771.1 1138.4 774.2V783.9Q1138.4 787 1141.5 787H1150M1142.8 779H1155.3M1151 774.3L1155.8 779L1151 783.7" stroke="#555" stroke-width="1.4" fill="none"/></svg>
<div class="t" style="left:1164px;top:773.30px;font-size:14.3px;line-height:14.3px;color:#444;font-weight:normal;font-family:'Liberation Sans', sans-serif;">Stop advanced analysis</div>
<div style="position:absolute;left:958px;top:851px;width:150.5px;height:31px;border:2px solid #7cc699;border-radius:9px;box-sizing:border-box"></div>
<div class="t" style="left:969.3px;top:861.31px;font-size:14.4px;line-height:14.4px;color:#3a3a3a;font-weight:normal;font-family:'Liberation Sans', sans-serif;">Suggest more ideas</div>
<div style="position:absolute;left:1119px;top:851px;width:148.5px;height:31px;border:2px solid #7cc699;border-radius:9px;box-sizing:border-box"></div>
<div class="t" style="left:1130px;top:861.40px;font-size:14.3px;line-height:14.3px;color:#3a3a3a;font-weight:normal;font-family:'Liberation Sans', sans-serif;">What else can I do?</div>
<div style="position:absolute;left:957.5px;top:909.7px;width:536.3px;height:66px;border:1px solid #d2d2d2;border-radius:18px;box-sizing:border-box;background:#fdfdfd;box-shadow:0 0 1.5px rgba(0,0,0,0.2),0 1px 2px rgba(0,0,0,0.12)"></div>
<div class="t" style="left:979px;top:935.31px;font-size:17px;line-height:17px;color:#707070;font-weight:normal;font-family:'Liberation Sans', sans-serif;">Message Copilot</div>
<svg style="position:absolute;left:1404px;top:930px" width="26" height="25" viewBox="1404 930 26 25"><circle cx="1414.2" cy="936.3" r="3.55" fill="#4a4a4a"/><circle cx="1411.3" cy="939.8" r="3.65" fill="#4a4a4a"/><circle cx="1410.8" cy="945.0" r="3.85" fill="#4a4a4a"/><circle cx="1413.6" cy="948.8" r="3.65" fill="#4a4a4a"/><circle cx="1414.5" cy="942.5" r="4.15" fill="#4a4a4a"/><circle cx="1419.0" cy="936.3" r="3.55" fill="#4a4a4a"/><circle cx="1421.9" cy="939.8" r="3.65" fill="#4a4a4a"/><circle cx="1422.4" cy="945.0" r="3.85" fill="#4a4a4a"/><circle cx="1419.6" cy="948.8" r="3.65" fill="#4a4a4a"/><circle cx="1418.7" cy="942.5" r="4.15" fill="#4a4a4a"/><circle cx="1414.2" cy="936.3" r="2.25" fill="#fdfdfd"/><circle cx="1411.3" cy="939.8" r="2.35" fill="#fdfdfd"/><circle cx="1410.8" cy="945.0" r="2.55" fill="#fdfdfd"/><circle cx="1413.6" cy="948.8" r="2.35" fill="#fdfdfd"/><circle cx="1414.5" cy="942.5" r="2.85" fill="#fdfdfd"/><circle cx="1419.0" cy="936.3" r="2.25" fill="#fdfdfd"/><circle cx="1421.9" cy="939.8" r="2.35" fill="#fdfdfd"/><circle cx="1422.4" cy="945.0" r="2.55" fill="#fdfdfd"/><circle cx="1419.6" cy="948.8" r="2.35" fill="#fdfdfd"/><circle cx="1418.7" cy="942.5" r="2.85" fill="#fdfdfd"/><path d="M1416.6 934.6V951.2M1415.3 938.4H1416.6M1408.8 941.7H1413.2V943.9M1425.2 941.7H1422.5M1420.5 943.5L1420.2 945.3H1416.6" stroke="#4a4a4a" stroke-width="1.25" fill="none"/><circle cx="1413.4" cy="938.4" r="1.75" stroke="#4a4a4a" stroke-width="1.2" fill="#fdfdfd"/><circle cx="1413.4" cy="945.8" r="1.75" stroke="#4a4a4a" stroke-width="1.2" fill="#fdfdfd"/><circle cx="1420.8" cy="941.7" r="1.75" stroke="#4a4a4a" stroke-width="1.2" fill="#fdfdfd"/></svg>
<svg style="position:absolute;left:1446px;top:930px" width="20" height="26" viewBox="1446 930 20 26"><rect x="1452.7" y="933.3" width="6.4" height="12.2" rx="3.2" stroke="#4a4a4a" stroke-width="1.5" fill="none"/><path d="M1449.4 942.3A6.5 7 0 0 0 1462.4 942.3M1455.9 949.3V952.8" stroke="#4a4a4a" stroke-width="1.5" fill="none"/></svg>
</body></html>
